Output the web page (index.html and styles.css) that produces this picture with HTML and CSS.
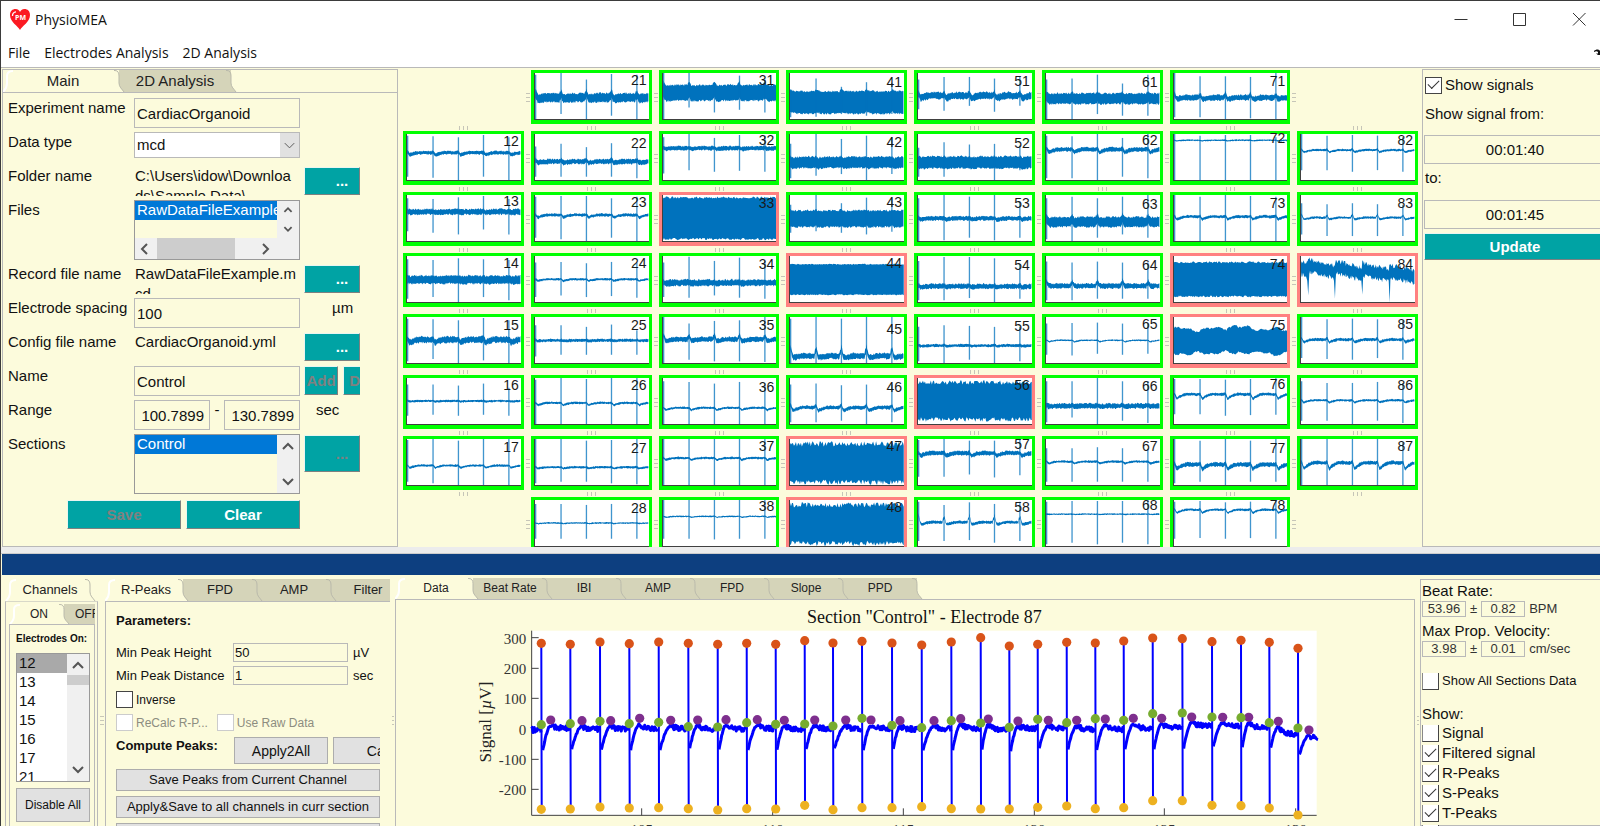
FILE: index.html
```html
<!DOCTYPE html>
<html lang="en">
<head>
<meta charset="utf-8">
<title>PhysioMEA</title>
<link rel="stylesheet" href="styles.css">
</head>
<body>
<div class="window">
  <header class="titlebar">
    <svg class="logo" viewBox="0 0 20 21" aria-hidden="true">
      <path d="M10 21 C8 17 0 13 0 6 C0 2 2.500 0 5.500 0 C8 0 9.500 1.500 10 3 C10.500 1.500 12 0 14.500 0 C17.500 0 20 2 20 6 C20 13 12 17 10 21Z" fill="#fb1a22"/>
      <path d="M2.500 7 C2.500 4.500 3.500 3 6 2.800" fill="none" stroke="#fff" stroke-width="1.300"/>
      <text x="10.500" y="11" text-anchor="middle" class="logo-text">PM</text>
    </svg>
    <h1 class="title">PhysioMEA</h1>
    <div class="window-buttons">
      <button aria-label="Minimize"><svg viewBox="0 0 14 14"><path d="M0.500 7.500H13.500"/></svg></button>
      <button aria-label="Maximize"><svg viewBox="0 0 14 14"><path d="M0.500 1.500H12.500V13.500H0.500Z"/></svg></button>
      <button aria-label="Close"><svg viewBox="0 0 14 14"><path d="M1 1L13.500 13.500M13.500 1L1 13.500"/></svg></button>
    </div>
  </header>
  <nav class="menubar">
    <button>File</button><button>Electrodes Analysis</button><button>2D Analysis</button>
    <svg class="dock-arrow" viewBox="0 0 6 8" aria-hidden="true"><path d="M0 2 C2 0 5 0 6 2 V6 H4 L2 4.500 H4 V3 C3 2 2 2 0 3Z" fill="#111"/></svg>
  </nav>

  <main class="top">
    <section class="panel setup">
      <div class="tabs tabs-large" role="tablist">
        <button class="tab active" role="tab">Main</button>
        <button class="tab" role="tab">2D Analysis</button>
      </div>
      <form class="form">
        <label for="exp">Experiment name</label>
        <input id="exp" value="CardiacOrganoid"><span></span>

        <label for="dtype">Data type</label>
        <div class="drop">
          <select id="dtype"><option>mcd</option></select>
          <svg viewBox="0 0 20 24" aria-hidden="true"><path d="M5 10l5 5 5-5"/></svg>
        </div><span></span>

        <span>Folder name</span>
        <span class="path">C:\Users\idow\Downloads\Sample Data\</span>
        <button type="button" class="teal browse" aria-label="Choose folder">...</button>

        <label for="files">Files</label>
        <div class="listbox files">
          <select id="files" size="2"><option selected>RawDataFileExample.mcd</option></select>
          <div class="vbar"><svg viewBox="0 0 20 20"><path d="M6 12l4-4 4 4"/></svg><svg viewBox="0 0 20 20"><path d="M6 8l4 4 4-4"/></svg></div>
          <div class="hbar"><svg viewBox="0 0 20 20"><path d="M12 5l-5 5 5 5"/></svg><i></i><svg viewBox="0 0 20 20"><path d="M8 5l5 5-5 5"/></svg></div>
        </div><span></span>

        <span>Record file name</span>
        <span class="path">RawDataFileExample.mcd</span>
        <button type="button" class="teal browse" aria-label="Choose record file">...</button>

        <label for="spacing">Electrode spacing</label>
        <input id="spacing" value="100"><span class="unit">µm</span>

        <span>Config file name</span>
        <span class="path">CardiacOrganoid.yml</span>
        <button type="button" class="teal browse" aria-label="Choose config file">...</button>

        <label for="secname">Name</label>
        <input id="secname" value="Control">
        <span class="pair"><button type="button" class="teal add" disabled>Add</button><button type="button" class="teal del" disabled>Del</button></span>

        <label for="from">Range</label>
        <span class="range"><input id="from" value="100.7899"><span>-</span><input aria-label="Range end" value="130.7899"></span>
        <span class="unit sec">sec</span>

        <label for="sections">Sections</label>
        <div class="listbox">
          <select id="sections" size="3"><option selected>Control</option></select>
          <div class="vbar"><svg viewBox="0 0 20 20"><path d="M5 13l5-5 5 5"/></svg><svg viewBox="0 0 20 20"><path d="M5 7l5 5 5-5"/></svg></div>
        </div>
        <button type="button" class="teal browse tall" disabled aria-label="Section options">...</button>

        <div class="actions">
          <button type="button" class="teal" disabled>Save</button>
          <button type="button" class="teal">Clear</button>
        </div>
      </form>
    </section>

    <section class="array" id="array" aria-label="Electrode signals"></section>

    <aside class="panel timing">
      <label class="check"><input type="checkbox" checked>Show signals</label>
      <label class="caption" for="t0">Show signal from:</label>
      <input id="t0" class="time" value="00:01:40">
      <label class="caption" for="t1">to:</label>
      <input id="t1" class="time" value="00:01:45">
      <button class="teal update">Update</button>
    </aside>
  </main>

  <div class="splitter"></div>
  <div class="bluebar"></div>

  <section class="bottom">
    <div class="channels">
      <div class="tabs tabs-channels" role="tablist"><button class="tab active" role="tab">Channels</button></div>
      <div class="channels-box">
        <div class="tabs tabs-onoff" role="tablist"><button class="tab active" role="tab">ON</button><button class="tab" role="tab">OFF</button></div>
        <div class="channels-inner">
          <label class="on-label" for="on">Electrodes On:</label>
          <div class="listbox channel-list">
            <select id="on" size="7">
              <option selected>12</option><option>13</option><option>14</option><option>15</option><option>16</option><option>17</option><option>21</option>
            </select>
            <div class="vbar"><svg viewBox="0 0 20 20"><path d="M5 13l5-5 5 5"/></svg><i></i><svg viewBox="0 0 20 20"><path d="M5 7l5 5 5-5"/></svg></div>
          </div>
          <button class="plain disable">Disable All</button>
        </div>
      </div>
    </div>

    <div class="grip"><i></i></div>

    <div class="peaks">
      <div class="tabs tabs-peaks" role="tablist">
        <button class="tab active" role="tab">R-Peaks</button><button class="tab" role="tab">FPD</button><button class="tab" role="tab">AMP</button><button class="tab" role="tab">Filter</button>
      </div>
      <div class="peaks-box">
        <h2>Parameters:</h2>
        <div class="params">
          <label for="mph">Min Peak Height</label><input id="mph" value="50"><span>µV</span>
          <label for="mpd">Min Peak Distance</label><input id="mpd" value="1"><span>sec</span>
        </div>
        <label class="check small"><input type="checkbox">Inverse</label>
        <div class="check-row">
          <label class="check small off"><input type="checkbox" disabled>ReCalc R-P...</label>
          <label class="check small off"><input type="checkbox" disabled>Use Raw Data</label>
        </div>
        <div class="compute"><h2>Compute Peaks:</h2><button class="plain">Apply2All</button><button class="plain calc">Calculate</button></div>
        <button class="plain wide">Save Peaks from Current Channel</button>
        <button class="plain wide">Apply&amp;Save to all channels in curr section</button>
        <button class="plain wide" aria-label="More"></button>
      </div>
    </div>

    <div class="grip dots"><i></i></div>

    <div class="data">
      <div class="tabs tabs-data" role="tablist">
        <button class="tab active" role="tab">Data</button><button class="tab" role="tab">Beat Rate</button><button class="tab" role="tab">IBI</button><button class="tab" role="tab">AMP</button><button class="tab" role="tab">FPD</button><button class="tab" role="tab">Slope</button><button class="tab" role="tab">PPD</button>
      </div>
      <div class="data-box"><svg id="chart" class="chart" viewBox="0 0 1018 250" role="img" aria-label="Section Control, electrode 87"></svg></div>
    </div>

    <div class="grip dots"><i></i></div>

    <aside class="panel results">
      <h3>Beat Rate:</h3>
      <div class="stat"><output>53.96</output><span>±</span><output>0.82</output><span>BPM</span></div>
      <h3 class="second">Max Prop. Velocity:</h3>
      <div class="stat"><output>3.98</output><span>±</span><output>0.01</output><span>cm/sec</span></div>
      <label class="check all"><input type="checkbox">Show All Sections Data</label>
      <h3 class="show">Show:</h3>
      <label class="check"><input type="checkbox">Signal</label>
      <label class="check"><input type="checkbox" checked>Filtered signal</label>
      <label class="check"><input type="checkbox" checked>R-Peaks</label>
      <label class="check"><input type="checkbox" checked>S-Peaks</label>
      <label class="check"><input type="checkbox" checked>T-Peaks</label>
      <label class="check"><input type="checkbox" aria-label="More"></label>
    </aside>
  </section>
</div>
<script src="app.js"></script>
</body>
</html>
```
FILE: styles.css
```css
:root {
  --cream: #fcfbdc;
  --tab: #d5d4b9;
  --line: #b9b9b9;
  --teal: #00a3a4;
  --signal: #0072bd;
}
* { box-sizing: border-box; }
body {
  margin: 0;
  font: 15px/20px "Liberation Sans", Arial, sans-serif;
  color: #111;
  background: var(--cream);
}
button, input, select, output { font: inherit; color: inherit; margin: 0; }
button { border: 0; background: none; padding: 0; }
h1, h2, h3 { margin: 0; font-weight: normal; font-size: inherit; }

.window {
  height: 100vh;
  overflow: hidden;
  display: flex;
  flex-direction: column;
  border-top: 1px solid #3b3b3b;
  border-left: 1px solid #3b3b3b;
}

/* title and menu */
.titlebar {
  display: flex;
  align-items: center;
  height: 36px;
  padding-left: 9px;
  background: #fff;
  flex: none;
}
.logo { width: 20px; height: 21px; margin-right: 5px; }
.logo-text { font: bold 7px "Open Sans", sans-serif; fill: #fff; }
.title { font: 14px/20px "Open Sans", sans-serif; padding-top: 2px; flex: 1; }
.window-buttons { display: flex; gap: 45px; margin-right: 14px; }
.window-buttons button { width: 14px; height: 14px; display: block; }
.window-buttons svg { display: block; }
.window-buttons path { fill: none; stroke: #333; stroke-width: 1; }
.menubar {
  display: flex;
  align-items: center;
  gap: 14px;
  height: 31px;
  padding: 2px 0 0 7px;
  background: #fff;
  border-bottom: 1px solid var(--line);
  font: 14px/20px "Open Sans", sans-serif;
  flex: none;
}
.dock-arrow { width: 6px; height: 8px; margin-left: auto; }

/* tabs */
.tabs { display: flex; font-size: 13px; overflow: hidden; flex: none; }
.tab {
  position: relative;
  flex: none;
  width: 74px;
  height: 22px;
  background: var(--tab);
  color: #222;
}
.tab.active { background: var(--cream); }
.tab .edge {
  position: absolute;
  right: -7px;
  top: 0;
  width: 12px;
  height: 100%;
  z-index: 2;
  overflow: visible;
}
.tab .edge .body { fill: var(--tab); }
.tab.active .edge .body { fill: var(--cream); }
.tab .edge .rim { fill: none; stroke: #b9b9ab; stroke-width: 1; }
.tab .lead { position: absolute; left: -6px; top: 0; width: 12px; height: 100%; }
.tab .lead path { fill: none; stroke: #fff; stroke-width: 2; }

/* shared controls */
.panel { border: 1px solid var(--line); }
input:not([type]) {
  width: 100%;
  min-width: 0;
  background: var(--cream);
  border: 1px solid var(--line);
  border-radius: 0;
  padding: 0 2px;
}
.teal {
  background: var(--teal);
  color: #fff;
  font-weight: bold;
  border: 1px solid;
  border-color: #e9f5f0 #7c8080 #7c8080 #e9f5f0;
  overflow: hidden;
}
.teal:disabled { color: #808080; }
.plain {
  background: #e1e1e1;
  border: 1px solid #adadad;
  font-size: 13px;
  line-height: 16px;
  white-space: nowrap;
}
.check { display: flex; align-items: center; gap: 4px; white-space: nowrap; }
.check input {
  appearance: none;
  width: 17px;
  height: 17px;
  flex: none;
  background: #fff;
  border: 1px solid #444;
  display: grid;
  place-items: center;
}
.check input:checked::after {
  content: "";
  width: 10px;
  height: 5px;
  margin-top: -4px;
  border: solid #333;
  border-width: 0 0 1px 1px;
  transform: rotate(-45deg);
}
.check.small { font-size: 12px; }
.check.off { color: #8d8d80; }
.check.off input { border-color: #ccc; }

/* setup form */
.top {
  flex: none;
  display: grid;
  grid-template-columns: 396px minmax(0, 1fr) 178px;
  gap: 4px;
  padding-left: 1px;
}
.setup { margin-top: 1px; }
.tabs-large { font-size: 15px; padding-left: 4px; border-bottom: 1px solid var(--line); }
.tabs-large .tab { width: 112px; }
.form {
  display: grid;
  grid-template-columns: 122px 166px 56px;
  grid-auto-rows: min-content;
  gap: 4px;
  padding: 5px 0 17px 5px;
}
.form > label, .form > span { white-space: nowrap; height: 20px; }
.form > input, .drop, .range input, .browse, .pair, .form > .path { height: 30px; }
.form > .path {
  white-space: normal;
  word-break: break-all;
  overflow: hidden;
  padding: 0 4px 0 1px;
  line-height: 20px;
}
.drop { position: relative; }
.drop select {
  appearance: none;
  width: 100%;
  height: 26px;
  border: 1px solid var(--line);
  border-radius: 0;
  background: #fff;
  padding: 0 2px;
}
.drop svg { position: absolute; right: 1px; top: 1px; width: 19px; height: 24px; background: #e1e1e1; }
.drop path { fill: none; stroke: #555; stroke-width: 1; }
.browse { padding-left: 20px; margin: 1px 0; }
.form .browse { height: 28px; }
.form .browse.tall { height: 37px; }
.form > .unit { padding-left: 28px; }
.form > .sec { padding-left: 12px; }
.form > .pair { display: flex; gap: 5px; overflow: hidden; height: 29px; }
.pair .teal { flex: none; height: 29px; }
.pair .add { width: 34px; }
.pair .del { width: 36px; }
.range { display: flex; gap: 4px; }
.form > .range { height: 30px; }
.range span { width: 6px; text-align: center; flex: none; }
.range input:not([type]) { text-align: right; padding-right: 5px; }
.actions { grid-column: 1 / -1; display: flex; gap: 5px; padding: 2px 0 0 59px; }
.actions .teal { width: 114px; height: 29px; }

/* list boxes */
.listbox {
  display: grid;
  grid-template-columns: minmax(0, 1fr) 22px;
  height: 60px;
  border: 1px solid #999;
  overflow: hidden;
}
.listbox select {
  appearance: none;
  border: 0;
  border-radius: 0;
  outline: 0;
  padding: 0;
  width: 100%;
  height: 100%;
  min-height: 0;
  background: var(--cream);
  overflow: hidden;
}
.listbox option { padding: 0 2px; height: 19px; min-height: 19px; line-height: 19px; color: #111; overflow: hidden; }
.listbox option:checked { background: #0078d7 linear-gradient(#0078d7, #0078d7); color: #fff; }
.vbar { background: #f0f0f0; display: flex; flex-direction: column; justify-content: space-between; align-items: center; padding: 1px 0; }
.vbar svg, .hbar svg { width: 20px; height: 20px; flex: none; }
.vbar path, .hbar path { fill: none; stroke: #555; stroke-width: 2; }
.files { grid-template-rows: 37px 1fr; }
.files .vbar { padding: 0; }
.files .vbar svg { height: 18px; }
.hbar { grid-column: 1 / -1; background: #f0f0f0; display: flex; align-items: center; }
.hbar i { width: 78px; height: 100%; background: #cdcdcd; margin: 0 20px 0 2px; }

/* electrode grid */
.array {
  display: grid;
  grid-template-columns: repeat(8, minmax(0, 1fr));
  grid-auto-rows: 54px;
  gap: 7px;
  padding: 2px 0 0 1px;
  height: 479px;
  overflow: hidden;
}
.slot { position: relative; }
.slot:not(:nth-child(8n))::after {
  content: "";
  position: absolute;
  right: -6px;
  top: 23px;
  width: 4px;
  height: 10px;
  background: repeating-linear-gradient(#c6c5b8 0 1px, transparent 1px 4px);
}
.slot:nth-child(-n + 56)::before {
  content: "";
  position: absolute;
  left: 56px;
  bottom: -6px;
  width: 10px;
  height: 4px;
  background: repeating-linear-gradient(90deg, #c6c5b8 0 1px, transparent 1px 4px);
}
.cell {
  display: block;
  position: relative;
  width: 100%;
  height: 54px;
  padding: 3px 3px 4px;
  background: #00ff00;
}
.cell.bad { background: #ff8080; }
.slot:nth-child(n + 57) .cell { height: 52px; padding-bottom: 2px; }
.cell svg { display: block; width: 100%; height: 100%; background: #fff; border: solid #404040; border-width: 0 0 1px 1px; }
.cell .band { fill: var(--signal); }
.cell .spike { stroke: var(--signal); stroke-width: 4; opacity: .75; fill: none; }
.cell span { position: absolute; right: 5px; font-size: 14px; line-height: 16px; color: #1a1a1a; }

/* time window */
.timing { margin-top: 1px; border-right: 0; padding: 6px 0 0 1px; overflow: hidden; }
.timing .check { height: 18px; padding-left: 1px; gap: 3px; }
.timing .caption { display: block; padding: 10px 0 11px 1px; }
.timing .time:not([type]) { width: 182px; height: 29px; text-align: center; display: block; }
.timing .time + .caption { padding: 4px 0 12px 1px; }
.update { width: 182px; height: 27px; margin-top: 4px; display: block; }

.splitter { height: 7px; background: #ececec; border-bottom: 1px solid #ccc; flex: none; }
.bluebar { height: 21px; background: #0d3f80; flex: none; margin-left: 1px; }

/* bottom area */
.bottom { flex: 1; min-height: 0; display: flex; overflow: hidden; padding-left: 4px; }
.bottom > * { flex: none; }
.channels { width: 93px; padding-top: 4px; }
.tabs-channels { padding-left: 5px; }
.tabs-channels .tab { width: 80px; }
.channels-box { border: 1px solid var(--line); border-top-color: #d8d8c8; padding: 2px 2px 0 3px; height: 300px; overflow: hidden; }
.tabs-onoff { font-size: 12px; padding-left: 5px; }
.tabs-onoff .tab { width: 50px; height: 20px; }
.tabs-onoff .tab:last-child { width: 46px; }
.channels-inner { border: 1px solid var(--line); padding: 4px 4px 0 6px; height: 300px; }
.on-label { display: block; font-size: 10px; font-weight: bold; white-space: nowrap; }
.channel-list { height: 129px; margin: 4px 0 6px; }
.channel-list select { background: #fff; }
.channel-list option:checked { background: #a9a9a9 linear-gradient(#a9a9a9, #a9a9a9); color: #111; }
.channel-list .vbar { justify-content: flex-start; }
.channel-list .vbar i { width: 100%; height: 10px; background: #cdcdcd; margin-bottom: auto; }
.disable { width: 100%; height: 34px; font-size: 12px; }

.grip { width: 7px; padding: 141px 0 0 2px; }
.grip i { display: block; width: 4px; height: 10px; background: repeating-linear-gradient(#c8c7b8 0 1px, transparent 1px 4px); }
.grip.dots { width: 5px; }
.grip.dots i { width: 2px; }

.peaks { width: 285px; padding-top: 4px; }
.tabs-peaks { padding-left: 4px; }
.peaks-box { border: solid var(--line); border-width: 1px 0 0 1px; padding: 9px 10px 0; height: 300px; overflow: hidden; font-size: 13px; }
.peaks h2 { font-weight: bold; }
.params { display: grid; grid-template-columns: 112px 115px 1fr; gap: 4px 5px; padding: 12px 0 5px; line-height: 19px; }
.params label { white-space: nowrap; }
.params input:not([type]) { height: 19px; padding-left: 1px; }
.peaks .check { height: 19px; }
.peaks .check.small { gap: 3px; }
.check-row { display: flex; gap: 9px; margin-top: 4px; }
.compute { display: flex; gap: 5px; padding: 5px 0; overflow: hidden; }
.compute h2 { width: 113px; flex: none; line-height: 17px; white-space: nowrap; }
.compute .plain { width: 94px; height: 27px; flex: none; font-size: 14px; }
.compute .calc { width: 126px; }
.wide { display: block; width: 264px; height: 22px; margin-bottom: 5px; }

.bottom > .data { flex: 1 1 0; min-width: 0; padding-top: 3px; }
.tabs-data { font-size: 12px; padding-left: 4px; }
.tabs-data .tab { height: 21px; padding-bottom: 1px; }
.data-box { border: 1px solid var(--line); }
.chart { display: block; width: 100%; height: auto; font-family: "Liberation Serif", "Times New Roman", serif; }
.chart text { fill: #333; font-size: 15px; }
.chart .heading { font-size: 18px; fill: #111; }
.chart .ylabel { font-size: 17px; fill: #222; }
.chart .axis { stroke: #404040; fill: none; }
.chart .trace { stroke: #00f; stroke-width: 2; fill: none; stroke-linejoin: round; }
.chart .rest { stroke: #00f; stroke-width: 3; fill: none; stroke-linejoin: round; }

.results { width: 180px; margin-top: 4px; padding: 1px 0 0 1px; border-right: 0; }
.results h3 { height: 20px; white-space: nowrap; }
.results .second { margin-top: 4px; height: 18px; }
.stat { display: flex; gap: 4px; font-size: 13px; line-height: 16px; color: #333; }
.stat output { width: 44px; height: 16px; line-height: 14px; border: 1px solid var(--line); text-align: center; }
.results .second + .stat { margin-top: 2px; }
.results .check { height: 20px; gap: 3px; }
.results .check input { border-width: 0 1px 1px; border-left-color: #888; }
.results .all { font-size: 13px; margin-top: 14px; }
.results .show { margin-top: 13px; height: 19px; }
```
FILE: app.js
```javascript
let seed = 7;
function rnd() {
  seed = (seed * 1664525 + 1013904223) % 4294967296;
  return seed / 4294967296;
}

/* tab outlines */
document.querySelectorAll(".tab").forEach((tab) => {
  tab.insertAdjacentHTML("beforeend",
    '<svg class="edge" viewBox="0 0 12 22" preserveAspectRatio="none" aria-hidden="true">' +
    '<path class="body" d="M0 0H1C4 0 5 3 5 6V13C5 17 8 19 10 22H0Z"/>' +
    '<path class="rim" d="M0 0.500H1C4 0.500 5 3 5 6V13C5 17 8 19 10 22"/></svg>');
  if (tab.classList.contains("active")) {
    tab.insertAdjacentHTML("beforeend",
      '<svg class="lead" viewBox="0 0 12 22" preserveAspectRatio="none" aria-hidden="true">' +
      '<path d="M2 22C5 19 6 17 6 13V6C6 3 8 1 12 1"/></svg>');
  }
});

/* electrode: [label y, centre, half band, dip, flare, spike tops, spike bottoms] */
const E = {
  21: [22, 75, 13, 5, 16, [5, 0, 20, 3, 5], [140, 125, 140, 130, 140]],
  31: [20, 60, 24, 4, 12, [0, 0, 28, 8, 20], [140, 105, 120, 112, 120]],
  41: [27, 90, 34, -2, 8, [50, 17, 42, 28, 30], [135, 133, 125, 130, 125]],
  51: [23, 69, 10, 9, 8, [20, 12, 12, 17, 10], [110, 115, 100, 118, 100]],
  61: [26, 78, 16, 2, 8, [20, 17, 5, 32, 5], [140, 140, 125, 130, 130]],
  71: [23, 75, 8, 6, 12, [0, 10, 10, 12, 0], [135, 135, 140, 138, 140]],
  12: [21, 57, 5, 7, 2, [5, 7, 10, 3, 10], [130, 133, 140, 130, 140]],
  22: [26, 84, 7, 4, 6, [38, 30, 40, 28, 40], [130, 130, 130, 130, 135]],
  32: [17, 43, 6, 3, 2, [10, 0, 12, 3, 5], [120, 110, 115, 112, 115]],
  42: [25, 86, 17, 4, 2, [30, 0, 15, 5, 10], [135, 127, 122, 140, 122]],
  52: [26, 86, 18, 3, 1, [42, 25, 32, 30, 35], [130, 130, 105, 140, 110]],
  62: [18, 47, 6, 10, 4, [5, 7, 0, 12, 0], [135, 135, 140, 130, 135]],
  72: [11, 19, 2, 2, 0, [0, 5, 3, 3, 10], [140, 140, 140, 140, 140]],
  82: [18, 49, 3, 7, 3, [0, 5, 3, 5, 10], [110, 110, 115, 110, 115]],
  13: [18, 51, 8, 2, 2, [10, 12, 7, 3, 12], [110, 115, 120, 105, 120]],
  23: [20, 61, 4, 8, 2, [5, 3, 3, 10, 5], [130, 135, 140, 130, 140]],
  33: [23, "block", 8, 134, 7],
  43: [22, 72, 25, 2, 4, [30, 0, 25, 8, 10], [115, 110, 115, 120, 112]],
  53: [23, 71, 6, 4, 2, [10, 0, 5, 0, 20], [140, 138, 130, 138, 130]],
  63: [26, 82, 15, 3, 14, [10, 5, 10, 5, 0], [135, 140, 130, 120, 130]],
  73: [23, 66, 4, 9, 3, [0, 5, 0, 3, 5], [140, 140, 140, 140, 140]],
  83: [23, 69, 3, 7, 12, [25, 28, 25, 28, 30], [120, 125, 125, 125, 125]],
  14: [22, 72, 12, 2, 1, [10, 12, 7, 10, 12], [130, 125, 140, 125, 135]],
  24: [22, 71, 3, 5, 1, [20, 18, 22, 18, 20], [125, 120, 125, 122, 127]],
  34: [25, 81, 9, 3, 1, [20, 2, 15, 5, 15], [125, 127, 120, 127, 130]],
  44: [22, "block", 25, 118, 3],
  54: [27, 92, 7, 3, 2, [15, 3, 3, 7, 25], [135, 135, 128, 140, 130]],
  64: [26, 91, 7, 2, 17, [17, 20, 17, 20, 20], [135, 135, 130, 130, 130]],
  74: [24, "block", 19, 123, 6],
  84: [25, "drift"],
  15: [24, 69, 9, 9, 3, [5, 7, 10, 3, 10], [135, 128, 140, 132, 140]],
  25: [23, 71, 4, 2, 1, [25, 25, 30, 23, 40], [120, 115, 115, 115, 115]],
  35: [24, 68, 7, 7, 16, [0, 20, 12, 10, 0], [140, 130, 135, 135, 137]],
  45: [36, 119, 8, 8, 32, [5, 0, 5, 0, 0], [140, 140, 140, 140, 140]],
  55: [27, 87, 4, 2, 2, [30, 25, 27, 30, 30], [135, 140, 130, 140, 135]],
  65: [22, 71, 2, 5, 1, [20, 18, 17, 20, 20], [115, 117, 112, 115, 112]],
  75: [23, "wavy"],
  85: [22, 69, 4, 9, 6, [0, 7, 5, 7, 10], [125, 128, 130, 125, 130]],
  16: [22, 70, 3, 2, 1, [20, 20, 23, 17, 30], [115, 112, 115, 112, 115]],
  26: [22, 76, 3, 7, 1, [5, 0, 3, 0, 0], [140, 140, 140, 140, 140]],
  36: [28, 91, 3, 7, 1, [10, 12, 17, 12, 20], [140, 140, 140, 140, 140]],
  46: [27, 90, 5, 11, 10, [20, 17, 22, 20, 20], [135, 135, 130, 140, 135]],
  56: [22, "block", 14, 126, 14],
  66: [24, 85, 7, 2, 4, [10, 10, 0, 10, 10], [135, 120, 140, 130, 137]],
  76: [17, 50, 4, 14, 2, [3, 3, 5, 3, 0], [110, 110, 115, 113, 112]],
  86: [22, 68, 3, 7, 1, [10, 15, 15, 12, 15], [130, 130, 140, 130, 137]],
  17: [25, 81, 3, 7, 1, [3, 0, 5, 0, 0], [130, 135, 140, 140, 140]],
  27: [27, 86, 3, 4, 1, [0, 0, 5, 3, 0], [135, 130, 130, 135, 138]],
  37: [20, 58, 3, 6, 1, [0, 0, 0, 0, 0], [140, 140, 140, 140, 140]],
  47: [22, "block", 15, 132, 16],
  57: [16, 43, 6, 9, 2, [3, 0, 5, 5, 0], [115, 115, 108, 117, 110]],
  67: [22, 69, 3, 6, 1, [28, 28, 25, 28, 30], [130, 130, 130, 130, 130]],
  77: [26, 78, 6, 14, 4, [0, 5, 0, 5, 0], [135, 130, 140, 130, 130]],
  87: [22, 73, 5, 19, 4, [0, 0, 0, 0, 10], [140, 140, 140, 140, 140]],
  28: [23, 70, 2, 2, 0, [12, 12, 15, 12, 20], [118, 118, 118, 118, 118]],
  38: [18, 50, 2, 3, 1, [0, 0, 0, 0, 0], [118, 118, 120, 118, 118]],
  48: [22, "block", 15, 132, 16],
  58: [22, 68, 4, 10, 26, [5, 15, 7, 12, 5], [125, 125, 122, 130, 125]],
  68: [14, 43, 2, 1, 0, [5, 3, 3, 3, 0], [135, 130, 135, 130, 135]],
  78: [14, 30, 3, 10, 3, [5, 3, 7, 5, 0], [118, 116, 118, 116, 118]]
};
const BEATS = [2, 79, 156, 232, 309];

function band(centre, half, noise, step) {
  const up = [], down = [];
  for (let x = 0; x <= 345; x += step) {
    const c = centre(x), h = half(x);
    up.push(x + " " + (c - h + (rnd() - 0.5) * noise).toFixed(1));
    down.unshift(x + " " + (c + h + (rnd() - 0.5) * noise).toFixed(1));
  }
  return '<path class="band" d="M' + up.join("L") + "L" + down.join("L") + 'Z"/>';
}

function drawCell(spec) {
  const kind = spec[1];
  if (kind === "block") {
    const mid = (spec[2] + spec[3]) / 2, h = (spec[3] - spec[2]) / 2;
    return band(() => mid, () => h, spec[4], 3);
  }
  if (kind === "wavy") {
    return band((x) => 72 + 3 * Math.sin(x / 40),
      (x) => 37 + 4 * Math.sin(x / 15) + 3 * Math.sin(x / 7 + 1) + (x > 160 && x < 195 ? 5 : 0), 5, 3);
  }
  if (kind === "drift") {
    const beats = [22, 103, 186, 269], bottoms = [120, 130, 118, 142];
    let out = band((x) => 27 + x * 0.07 + 14 * (((x + 60) % 82) / 82), () => 19, 15, 2);
    beats.forEach((b, i) => {
      out += `<path class="band" d="M${b - 10} 50L${b - 3} 75L${b} ${bottoms[i]}L${b + 2} 75L${b + 4} 40Z"/>`;
    });
    return out;
  }
  const [, base, hb, dip, flare, tops, bots] = spec;
  const centre = (x) => {
    let c = base;
    BEATS.forEach((b) => {
      const d = x - b;
      if (d >= 0 && d < 60) {
        c += dip * Math.min(1, d / 7) * Math.exp(-Math.max(0, d - 7) / 12) - flare * Math.exp(-d / 4) * 0.9;
        if (d > 20) c -= dip * 0.12 * Math.sin((d - 20) / 40 * Math.PI);
      } else if (d < 0 && d > -5) c -= flare * 0.4;
    });
    return c;
  };
  let out = band(centre, () => hb, Math.min(6, hb * 0.6 + 0.6), 2);
  BEATS.forEach((b, i) => { out += `<path class="spike" d="M${b} ${tops[i]}V${bots[i]}"/>`; });
  return out;
}

const array = document.getElementById("array");
for (let row = 1; row <= 8; row++) {
  for (let col = 1; col <= 8; col++) {
    const id = col * 10 + row, spec = E[id];
    const slot = document.createElement("div");
    slot.className = "slot";
    if (spec) {
      const bad = typeof spec[1] === "string" ? " bad" : "";
      slot.innerHTML = `<button class="cell${bad}"><svg viewBox="0 0 345 140" preserveAspectRatio="none" aria-hidden="true">${drawCell(spec)}</svg>` +
        `<span style="top:${Math.round(spec[0] / 3) - 5}px">${id}</span></button>`;
    }
    array.append(slot);
  }
}

/* main chart; sample positions are stored at three units per pixel */
const px = (u) => u / 3 - 6;
const py = (v) => v / 3 - 40;
const BX = [454, 541, 630, 718, 806, 895, 983, 1070, 1157, 1244, 1329, 1416, 1506, 1595, 1684, 1772, 1858, 1943, 2030, 2116, 2201, 2288, 2377, 2466, 2553, 2638, 2724];
const R = [250, 253, 246, 251, 246, 250, 253, 250, 253, 242, 249, 244, 249, 255, 246, 233, 258, 253, 247, 249, 243, 234, 236, 245, 241, 247, 265];
const S = [748, 747, 741, 744, 743, 746, 750, 746, 747, 736, 749, 743, 743, 740, 746, 747, 747, 742, 738, 746, 743, 722, 722, 736, 737, 744, 765];
const G = [494, 491, 484, 491, 487, 500, 501, 488, 493, 492, 498, 475, 496, 503, 482, 489, 502, 478, 488, 476, 481, 461, 459, 471, 473, 488, 504];
const T = [[482, 480], [576, 482], [662, 482], [749, 475], [842, 481], [923, 480], [1008, 479], [1102, 479], [1183, 481], [1274, 480], [1367, 480], [1443, 480], [1530, 482], [1632, 482], [1712, 476], [1795, 477], [1884, 483], [1975, 481], [2060, 481], [2146, 477], [2230, 475], [2315, 475], [2405, 471], [2498, 472], [2576, 472], [2665, 484], [2757, 510]];
const BASE = [512, 505, 508, 508, 508, 506, 508, 508, 506, 508, 506, 508, 506, 508, 507, 506, 510, 505, 506, 508, 508, 506, 504, 498, 500, 503, 523, 538];

const at = (u, v) => px(u).toFixed(1) + " " + py(v).toFixed(1);
let spikes = "", rest = "";
const lead = [];
for (let u = 425; u < 454; u += 2) lead.push(at(u, 510 + (rnd() - 0.5) * 18));
rest += "M" + lead.join("L");
BX.forEach((b, i) => {
  const next = BX[i + 1] || 2786, after = BASE[i + 1], dip = 568 + (BASE[i] - 507);
  const t = Math.max(20, T[i][0] - b), top = T[i][1] + 16;
  spikes += `M${at(b, R[i])}L${at(b + 1, S[i])}`;
  const seg = [];
  for (let u = b + 4; u < next; u += 2) {
    const d = u - b;
    const v = d < t
      ? top + (dip - top) * Math.pow(1 - (d - 4) / (t - 4), 1.7)
      : after - (after - top) * Math.exp(-(d - t) / 14);
    seg.push(at(u, v + (rnd() - 0.5) * (d < t ? 5 : 15)));
  }
  rest += "M" + seg.join("L");
});
const dot = (u, v, c) => `<circle cx="${px(u).toFixed(1)}" cy="${py(v).toFixed(1)}" r="4.600" fill="${c}"/>`;
let art = `<rect x="${px(425)}" y="${py(212)}" width="${(2780 - 425) / 3}" height="${554 / 3}" fill="#fff"/>`;
art += `<path class="axis" d="M${px(425)} ${py(212)}V${py(766)}H${px(2780)}"/>`;
[[300, 233], [200, 325], [100, 415], [0, 507], [-100, 598], [-200, 688]].forEach(([n, v]) => {
  art += `<path class="axis" d="M${px(425)} ${py(v)}h7"/><text x="${px(409)}" y="${py(v) + 6}" text-anchor="end">${n}</text>`;
});
[[105, 755], [110, 1148], [115, 1540], [120, 1933], [125, 2323], [130, 2717]].forEach(([n, u]) => {
  art += `<path class="axis" d="M${px(u)} ${py(766)}v-7"/><text x="${px(u)}" y="235" text-anchor="middle">${n}</text>`;
});
art += `<path class="trace" d="${spikes}"/><path class="rest" d="${rest}"/>`;
BX.forEach((b, i) => {
  art += dot(b, R[i], "#d95319") + dot(b, S[i], "#edb120") + dot(T[i][0], T[i][1], "#7e2f8e") + dot(b, G[i], "#77ac30");
});
art += `<text class="heading" x="${px(1603)}" y="23" text-anchor="middle">Section "Control" - Electrode 87</text>`;
art += `<text class="ylabel" transform="translate(95 122) rotate(-90)" text-anchor="middle">Signal [<tspan font-style="italic">µ</tspan>V]</text>`;
document.getElementById("chart").innerHTML = art;
```
